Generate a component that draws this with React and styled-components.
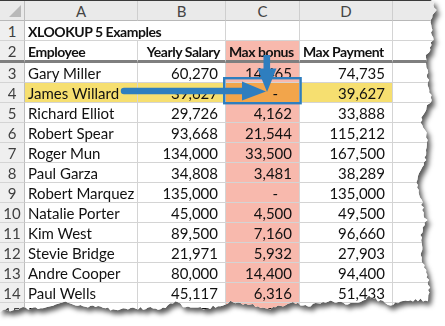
import React from 'react';
import styled, { createGlobalStyle } from 'styled-components';

const GlobalStyle = createGlobalStyle`
  html, body {
    margin: 0;
    padding: 0;
    background: #ffffff;
  }
  body {
    font-family: Lato, "Liberation Sans", sans-serif;
  }
`;

// torn paper outline, made once from a seeded random
let seed = 7;
const rand = () => {
  seed = (seed * 16807) % 2147483647;
  return seed / 2147483647;
};

const lerp = (pts, v) => {
  for (let i = 0; i < pts.length - 1; i++) {
    const [a, av] = pts[i];
    const [b, bv] = pts[i + 1];
    const lo = Math.min(a, b);
    const hi = Math.max(a, b);
    if (v >= lo && v <= hi) {
      const t = (v - a) / (b - a || 1);
      return av + (bv - av) * t;
    }
  }
  return pts[pts.length - 1][1];
};

const rightEdge = [
  [0, 432], [10, 436], [20, 430], [40, 433], [60, 425], [80, 428], [100, 431],
  [120, 421], [140, 428], [160, 425], [180, 416], [200, 421], [220, 426],
  [240, 420], [260, 423], [280, 428], [296, 430],
];

const bottomEdge = [
  [428, 300], [410, 300], [390, 305], [370, 297], [350, 304], [330, 301],
  [310, 305], [290, 303], [270, 309], [250, 305], [230, 302], [210, 308],
  [190, 309], [175, 302], [160, 309], [140, 308], [120, 310], [100, 308],
  [80, 305], [65, 302], [45, 307], [25, 308], [0, 311],
];

const buildTear = () => {
  const pts = ['0px 0px'];
  for (let y = 0; y <= 296; y += 2.5) {
    const x = lerp(rightEdge, y) + (rand() - 0.5) * 3.2;
    pts.push(`${x.toFixed(1)}px ${y.toFixed(1)}px`);
  }
  for (let x = 428; x >= 0; x -= 2.5) {
    const y = lerp(bottomEdge, x) + (rand() - 0.5) * 3.2;
    pts.push(`${x.toFixed(1)}px ${y.toFixed(1)}px`);
  }
  pts.push('0px 312px');
  return `polygon(${pts.join(', ')})`;
};

const tear = buildTear();

const Page = styled.div`
  width: 445px;
  height: 326px;
  overflow: hidden;
  background: #ffffff;
`;

const Shadow = styled.div`
  width: 445px;
  height: 326px;
  filter: drop-shadow(3px 4px 2.5px rgba(0, 0, 0, 0.65));
`;

const Paper = styled.div`
  position: relative;
  width: 445px;
  height: 326px;
  background: #ffffff;
  border-top: 1px solid #3a3a3a;
  box-sizing: border-box;
`;

const Row = styled.div`
  display: grid;
  grid-template-columns: 25px 113px 88px 74px 93px 1fr;
  height: ${(p) => p.$h || 20}px;
`;

const Cell = styled.div`
  box-sizing: border-box;
  grid-column: span ${(p) => p.$span || 1};
  display: flex;
  align-items: center;
  justify-content: ${(p) => (p.$align === 'right' ? 'flex-end' : 'flex-start')};
  padding: 1px ${(p) => p.$pr ?? 7}px 0 3px;
  background: ${(p) => p.$bg || '#ffffff'};
  border-right: 1px solid #d4d4d4;
  border-bottom: ${(p) => (p.$thick ? '3px solid #7f7f7f' : '1px solid #d4d4d4')};
  font-size: ${(p) => (p.$bold ? 14 : 15)}px;
  font-weight: ${(p) => (p.$bold ? 700 : 400)};
  letter-spacing: ${(p) => (p.$bold ? '-0.45px' : '0')};
  color: #111111;
  white-space: nowrap;
  overflow: hidden;
`;

const RowNum = styled.div`
  box-sizing: border-box;
  display: flex;
  align-items: center;
  justify-content: center;
  padding-top: 1px;
  background: #efefef;
  border-right: 1px solid #bdbdbd;
  border-bottom: ${(p) => (p.$thick ? '3px solid #7f7f7f' : '1px solid #d4d4d4')};
  font-size: 15px;
  color: #3f3f3f;
`;

const ColHead = styled.div`
  box-sizing: border-box;
  display: flex;
  align-items: center;
  justify-content: center;
  background: #eaeaea;
  border-right: 1px solid #cfcfcf;
  border-bottom: 1px solid #b8b8b8;
  font-size: 15px;
  color: #444444;
`;

const Corner = styled(ColHead)`
  position: relative;
  border-right-color: #bdbdbd;
  &::after {
    content: '';
    position: absolute;
    right: 3px;
    bottom: 3px;
    border-left: 12px solid transparent;
    border-bottom: 12px solid #b9b9b9;
  }
`;

const Overlay = styled.svg`
  position: absolute;
  left: 0;
  top: -1px;
  pointer-events: none;
`;

const PINK = '#f8b9ad';
const YELLOW = '#f6df70';
const ORANGE = '#f2a54b';
const BLUE = '#2e7ebf';

const people = [
  [3, 'Gary Miller', '60,270', '14,465', '74,735'],
  [4, 'James Willard', '39,627', '-', '39,627'],
  [5, 'Richard Elliot', '29,726', '4,162', '33,888'],
  [6, 'Robert Spear', '93,668', '21,544', '115,212'],
  [7, 'Roger Mun', '134,000', '33,500', '167,500'],
  [8, 'Paul Garza', '34,808', '3,481', '38,289'],
  [9, 'Robert Marquez', '135,000', '-', '135,000'],
  [10, 'Natalie Porter', '45,000', '4,500', '49,500'],
  [11, 'Kim West', '89,500', '7,160', '96,660'],
  [12, 'Stevie Bridge', '21,971', '5,932', '27,903'],
  [13, 'Andre Cooper', '80,000', '14,400', '94,400'],
  [14, 'Paul Wells', '45,117', '6,316', '51,433'],
  [15, 'Robert Muir', '55,575', '2,970', '58,545'],
];

const Arrows = () => (
  <Overlay width="445" height="326" viewBox="0 0 445 326">
    <rect x="224.2" y="78.2" width="76.4" height="25" fill="none" stroke={BLUE} strokeWidth="2.4" />
    <line x1="124" y1="91" x2="245" y2="91" stroke={BLUE} strokeWidth="6.5" strokeLinecap="round" />
    <polygon points="242,81.5 266,91.5 242,100.5" fill={BLUE} />
    <rect x="263.5" y="55" width="6.6" height="16" fill={BLUE} />
    <polygon points="257.5,68.5 276.5,68.5 267,92" fill={BLUE} />
  </Overlay>
);

const App = () => (
  <Page>
    <GlobalStyle />
    <Shadow>
      <Paper style={{ clipPath: tear }}>
        <Row>
          <Corner />
          <ColHead>A</ColHead>
          <ColHead>B</ColHead>
          <ColHead>C</ColHead>
          <ColHead>D</ColHead>
          <ColHead />
        </Row>
        <Row>
          <RowNum>1</RowNum>
          <Cell $bold $span={2}>XLOOKUP 5 Examples</Cell>
          <Cell />
          <Cell />
          <Cell />
        </Row>
        <Row $h={22}>
          <RowNum $thick>2</RowNum>
          <Cell $bold $thick>Employee</Cell>
          <Cell $bold $thick $align="right" $pr={5}>Yearly Salary</Cell>
          <Cell $bold $thick $bg={PINK}>Max bonus</Cell>
          <Cell $bold $thick>Max Payment</Cell>
          <Cell $thick />
        </Row>
        {people.map(([n, name, b, c, d]) => {
          const hi = n === 4;
          const dash = c === '-';
          return (
            <Row key={n}>
              <RowNum>{n}</RowNum>
              <Cell $bg={hi ? YELLOW : undefined}>{name}</Cell>
              <Cell $align="right" $bg={hi ? YELLOW : undefined}>{b}</Cell>
              <Cell $align="right" $pr={dash ? 21 : 7} $bg={hi ? ORANGE : PINK}>{c}</Cell>
              <Cell $align="right" $bg={hi ? YELLOW : undefined}>{d}</Cell>
              <Cell />
            </Row>
          );
        })}
        <Arrows />
      </Paper>
    </Shadow>
  </Page>
);

export default App;
